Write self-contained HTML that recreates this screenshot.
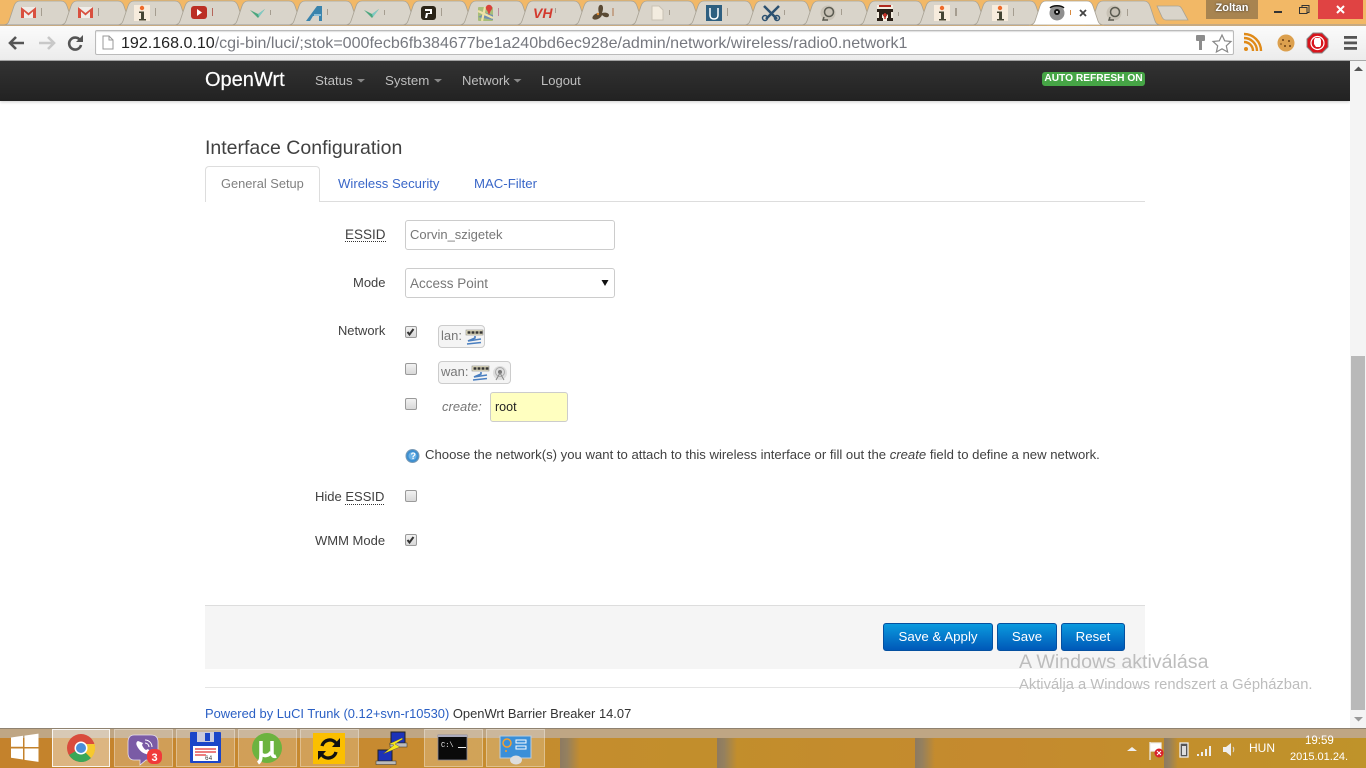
<!DOCTYPE html>
<html><head><meta charset="utf-8"><title>OpenWrt</title>
<style>
html,body{margin:0;padding:0;width:1366px;height:768px;overflow:hidden;background:#fff;font-family:"Liberation Sans",Arial,sans-serif;font-size:14px;color:#404040}
.a{position:absolute;white-space:nowrap}
svg{position:absolute;overflow:visible}
.cb{position:absolute;width:10px;height:10px;border:1px solid #9a9a9a;border-radius:2px;background:linear-gradient(#f2f2f2,#d8d8d8)}
.btn{position:absolute;top:623px;height:26px;border:1px solid #0450a0;border-radius:3px;background:linear-gradient(#0a9ade,#0058b8);color:#fff;text-align:center;line-height:25px;font-size:13.300px}
.inp{position:absolute;box-sizing:border-box;border:1px solid #ccc;border-radius:3px;background:#fff;color:#777}
.bdg{position:absolute;box-sizing:border-box;border:1px solid #ccc;border-radius:4px;background:#f4f4f4;color:#777;height:23px;line-height:20px;padding-left:2px}
.tb{position:absolute;top:729px;height:38px;box-sizing:border-box;border:1px solid rgba(255,255,255,.32);background:rgba(255,255,255,.2)}
.st{position:absolute;top:738px;height:30px;background:linear-gradient(90deg,#8d7a60,#94805f 35%,rgba(141,122,96,0))}
</style></head><body>

<!-- title bar / tabs -->
<div class="a" style="left:0;top:0;width:1366px;height:26px;background:#f2b866"></div>
<svg style="left:0;top:0" width="1366" height="26">
<defs><path id="t" d="M0 25 C3 25 5 24 6 21 L11 6 C12 3 14 1 17 1 L58 1 C61 1 63 3 64 6 L69 21 C70 24 72 25 75 25 Z" fill="#d9d4ca" stroke="#a8a294" stroke-width=".8"/></defs>
<use href="#t" x="3"/><use href="#t" x="60"/><use href="#t" x="117"/><use href="#t" x="174"/><use href="#t" x="231"/><use href="#t" x="288"/><use href="#t" x="345"/><use href="#t" x="402"/><use href="#t" x="459"/><use href="#t" x="516"/><use href="#t" x="573"/><use href="#t" x="630"/><use href="#t" x="687"/><use href="#t" x="744"/><use href="#t" x="801"/><use href="#t" x="858"/><use href="#t" x="915"/><use href="#t" x="972"/><use href="#t" x="1086"/>
<path d="M1029 25 C1032 25 1034 24 1035 21 L1040 6 C1041 3 1043 1 1046 1 L1087 1 C1090 1 1092 3 1093 6 L1098 21 C1099 24 1101 25 1104 25 Z" fill="#fff" stroke="#a8a294" stroke-width=".8"/>
<path d="M1157 6 L1178 6 C1180 6 1181 7 1182 9 L1188 20 L1166 20 C1164 20 1163 19 1162 17 Z" fill="#d9d4ca" stroke="#a8a294" stroke-width=".8"/>
<line x1="0" y1="25" x2="1029" y2="25" stroke="#9c9c9c"/><line x1="1104" y1="25" x2="1366" y2="25" stroke="#9c9c9c"/>
<!-- gmail -->
<g id="m"><rect x="21" y="7" width="15" height="11" fill="#f0ede8"/><path d="M21 18V7l7.500 6L36 7v11h-3V11.500l-4.500 4-4.500-4V18Z" fill="#d9503f"/></g>
<use href="#m" x="57"/>
<rect x="41" y="8" width="1" height="8" fill="#a59d90"/><rect x="98" y="8" width="1" height="8" fill="#a59d90"/>
<!-- i -->
<g id="i"><rect x="134" y="5" width="16" height="16" fill="#f7ecdd"/><circle cx="142" cy="8" r="2.200" fill="#ee6a2b"/><path d="M139 11.500h5V19h2v1.500h-7V19h2v-6h-2Z" fill="#443"/></g>
<rect x="155" y="8" width="1" height="8" fill="#a59d90"/>
<!-- youtube -->
<rect x="191" y="6" width="16" height="13" rx="3" fill="#bb2f24"/><path d="M197 9l5 3.500-5 3.500Z" fill="#fff"/><rect x="212" y="8" width="1" height="8" fill="#b5655a"/>
<!-- V -->
<g id="v"><path d="M250 10l8 4 7-5-7 9Z" fill="#4aa67e"/><path d="M258 14l7-5-6 8Z" fill="#7fc9c4"/></g>
<rect x="270" y="10" width="1" height="5" fill="#a59d90"/>
<use href="#v" x="114"/><rect x="384" y="10" width="1" height="5" fill="#a59d90"/>
<!-- A -->
<path d="M306 21L317 6h5v15h-3v-5h-6l-3 5Z" fill="#3a84ad"/><path d="M314 14h7v2h-7Z" fill="#8fc0d8"/><rect x="327" y="9" width="1" height="6" fill="#a59d90"/>
<!-- P -->
<rect x="421" y="6" width="15" height="14" rx="3" fill="#2a2418"/><path d="M425 9h7v5h-4l-1 4h-2l1-5h4V11h-5Z" fill="#fff"/><rect x="441" y="8" width="1" height="8" fill="#a59d90"/>
<!-- maps -->
<rect x="478" y="7" width="15" height="14" rx="1" fill="#a7bd7a"/><path d="M478 17l15 3V15l-7-2Z" fill="#6f8fb0"/><path d="M478 11l15 7M485 7l-3 14" stroke="#efe2a8" stroke-width="2.200"/><circle cx="489" cy="8" r="3.200" fill="#d9403a"/><path d="M487 10l2 5 2-5Z" fill="#d9403a"/><rect x="498" y="8" width="1" height="8" fill="#c08a9a"/>
<!-- VH -->
<text x="533" y="18" font-family="Liberation Sans" font-size="14" font-weight="bold" font-style="italic" fill="#d33a2e">VH</text><rect x="555" y="8" width="1" height="5" fill="#a59d90"/>
<!-- fan -->
<path d="M599 13c-1-3-1-7 1-8 3-1 4 3 2 8 3-1 7 0 7 2 0 3-4 3-7 0-1 3-6 6-9 4-2-2 2-6 6-6Z" fill="#5a4a34"/><circle cx="598" cy="14" r="1.200" fill="#e08a30"/><rect x="612" y="8" width="2" height="8" fill="#c4a48a"/>
<!-- doc -->
<path d="M652 6h7l4 4v10h-11Z" fill="#f3ecdf" stroke="#c9c2b4"/><rect x="669" y="10" width="1" height="5" fill="#a59d90"/>
<!-- U -->
<rect x="706" y="5" width="16" height="16" fill="#2e5f80"/><path d="M710 8v7c0 3 2 4 4 4s4-1 4-4V8" stroke="#fff" fill="none" stroke-width="1.500"/><rect x="727" y="8" width="1" height="8" fill="#a59d90"/>
<!-- scissors -->
<path d="M764 6l13 13M779 6L766 19" stroke="#2b5070" stroke-width="2.500"/><circle cx="765" cy="18" r="2.500" fill="none" stroke="#2b5070" stroke-width="1.500"/><circle cx="777" cy="18" r="2.500" fill="none" stroke="#2b5070" stroke-width="1.500"/><rect x="784" y="10" width="1" height="5" fill="#a59d90"/>
<!-- Q -->
<g id="q"><circle cx="828" cy="13" r="7.500" fill="#c8c2b6"/><circle cx="829" cy="12" r="4.500" fill="none" stroke="#5a5a50" stroke-width="1.500"/><path d="M824 17l-1 3h5" stroke="#5a5a50" fill="none" stroke-width="1.500"/></g><rect x="841" y="9" width="1" height="6" fill="#a59d90"/>
<!-- M -->
<rect x="877" y="5" width="16" height="16" fill="#f4ede0"/><path d="M877 9h16v3h-2v6h2v3h-6v-3h1v-4l-3 4-3-4v4h1v3h-6v-3h2v-6h-2Z" fill="#2a2018"/><rect x="879" y="5" width="12" height="2" fill="#b02a20"/><path d="M885 13v6M883 15h4" stroke="#d03028" stroke-width="1.500"/><rect x="898" y="12" width="1" height="4" fill="#a59d90"/>
<use href="#i" x="800"/><rect x="955" y="8" width="2" height="8" fill="#a59d90"/>
<use href="#i" x="858"/><rect x="1013" y="8" width="1" height="8" fill="#a59d90"/>
<!-- active -->
<circle cx="1057" cy="13" r="7.500" fill="#8f8f8f"/><circle cx="1057" cy="12" r="3" fill="#111"/><path d="M1050 8c3-3 11-3 14 0" fill="none" stroke="#111" stroke-width="1.500"/><circle cx="1057" cy="12" r="1" fill="#fff"/><rect x="1070" y="10" width="1" height="5" fill="#d88a40"/>
<path d="M1080 10l6 6M1086 10l-6 6" stroke="#444" stroke-width="1.800"/>
<use href="#q" x="286"/><rect x="1127" y="9" width="1" height="7" fill="#a59d90"/>
</svg>
<!-- window controls -->
<div class="a" style="left:1206px;top:0;width:52px;height:19px;background:#a88450;color:#fff;font-size:11px;font-weight:bold;text-align:center;line-height:17px;text-shadow:0 0 2px #333">Zoltan</div>
<svg style="left:0;top:0" width="1366" height="26">
<rect x="1274" y="11" width="8" height="2" fill="#333"/>
<rect x="1302" y="5.500" width="7" height="7" fill="none" stroke="#333"/><rect x="1299.500" y="7.500" width="7.500" height="6" fill="#f2b866" stroke="#333"/>
<rect x="1318" y="0" width="45" height="19" fill="#e04343"/>
<path d="M1337 6l7 7M1344 6l-7 7" stroke="#fff" stroke-width="2"/>
</svg>

<!-- toolbar -->
<div class="a" style="left:0;top:26px;width:1366px;height:34px;background:linear-gradient(#fbfbfb,#ececec)"></div>
<div class="a" style="left:0;top:60px;width:1366px;height:1px;background:#a8a8a8"></div>
<svg style="left:0;top:0" width="1366" height="61">
<path d="M24 43H11M16 37l-6 6 6 6" fill="none" stroke="#555" stroke-width="2.600"/>
<path d="M39 43h13M48 37l6 6-6 6" fill="none" stroke="#c8c8c8" stroke-width="2.600"/>
<path d="M80 40a6 6 0 1 0 1 5" fill="none" stroke="#555" stroke-width="2.600"/><path d="M83 35v7h-7Z" fill="#555"/>
<circle cx="1246" cy="49" r="2" fill="#e08a18"/>
<path d="M1244 42a9 9 0 0 1 9 9M1244 38a13 13 0 0 1 13 13M1244 34a17 17 0 0 1 17 17" fill="none" stroke="#e08a18" stroke-width="2.400"/>
<circle cx="1286" cy="43" r="8.500" fill="#dca04e"/><circle cx="1283" cy="40" r="1" fill="#6a3f14"/><circle cx="1289" cy="41" r="1" fill="#6a3f14"/><circle cx="1285" cy="46" r="1" fill="#6a3f14"/><circle cx="1290" cy="46" r="1" fill="#6a3f14"/><circle cx="1281" cy="44" r=".8" fill="#6a3f14"/>
<path d="M1313 33h9l6 6v8l-6 6h-9l-6-6v-8Z" fill="#d8141c" stroke="#888"/><circle cx="1317.500" cy="43" r="6.500" fill="none" stroke="#fff" stroke-width="1.200"/><path d="M1314 40l1-2h5l1 2v5l-1 2h-4l-2-3Z" fill="#fff"/>
<rect x="1344" y="36" width="13" height="2.800" fill="#555"/><rect x="1344" y="41.500" width="13" height="2.800" fill="#555"/><rect x="1344" y="47" width="13" height="2.800" fill="#555"/>
</svg>
<div class="a" style="left:95px;top:30px;width:1139px;height:25px;box-sizing:border-box;border:1px solid #bbb;border-radius:2px;background:#fff;box-shadow:inset 0 1px 1px #ddd"></div>
<svg style="left:0;top:0" width="120" height="60"><path d="M103 36h6l4 4v9h-10Z" fill="#fff" stroke="#999"/><path d="M109 36v4h4" fill="none" stroke="#999"/></svg>
<div class="a" style="left:121px;top:33px;font-size:16.060px;line-height:20px;color:#76787f"><span style="color:#222">192.168.0.10</span>/cgi-bin/luci/;stok=000fecb6fb384677be1a240bd6ec928e/admin/network/wireless/radio0.network1</div>
<svg style="left:0;top:0" width="1366" height="61">
<rect x="1196" y="35" width="9" height="6" rx="1" fill="#8c8c8c"/><rect x="1199" y="41" width="3" height="9" fill="#8c8c8c"/>
<path d="M1222 35l2.700 5.800 6.300.700-4.700 4.300 1.300 6.200-5.600-3.200-5.600 3.200 1.300-6.200-4.700-4.300 6.300-.700Z" fill="#fff" stroke="#888" stroke-width="1.200"/>
</svg>

<!-- nav -->
<div class="a" style="left:0;top:61px;width:1350px;height:40px;background:linear-gradient(#333,#222);box-shadow:0 1px 3px rgba(0,0,0,.2)"></div>
<div class="a" style="left:205px;top:66px;font-size:20px;line-height:28px;color:#fff;-webkit-text-stroke:.2px #fff">OpenWrt</div>
<div class="a" style="left:315px;top:72px;color:#bfbfbf;line-height:18px;font-size:13.300px">Status</div>
<div class="a" style="left:385px;top:72px;color:#bfbfbf;line-height:18px;font-size:13.300px">System</div>
<div class="a" style="left:462px;top:72px;color:#bfbfbf;line-height:18px;font-size:13px">Network</div>
<div class="a" style="left:541px;top:72px;color:#bfbfbf;line-height:18px;font-size:13px">Logout</div>
<svg style="left:0;top:0" width="600" height="100"><path d="M357 79h8l-4 3.500Z M434 79h8l-4 3.500Z M513.500 79h8l-4 3.500Z" fill="#888"/></svg>
<div class="a" style="left:1042px;top:72px;width:103px;height:14px;background:#46a546;border-radius:3px;color:#fff;font-size:10.200px;font-weight:bold;text-align:center;line-height:14px">AUTO REFRESH ON</div>

<!-- scrollbar -->
<div class="a" style="left:1350px;top:61px;width:16px;height:667px;background:#f4f4f4"></div>
<div class="a" style="left:1351px;top:356px;width:14px;height:354px;background:#b9b9b9"></div>
<svg style="left:0;top:0" width="1366" height="728"><path d="M1354 71h9l-4.500-4.500Z" fill="#555"/><path d="M1354 717h9l-4.500 4.500Z" fill="#999"/></svg>

<!-- content -->
<div class="a" style="left:205px;top:135px;font-size:19.500px;line-height:26px;color:#404040">Interface Configuration</div>
<div class="a" style="left:205px;top:201px;width:940px;height:1px;background:#ddd"></div>
<div class="a" style="left:205px;top:166px;width:115px;height:36px;box-sizing:border-box;border:1px solid #ddd;border-bottom:0;border-radius:4px 4px 0 0;background:#fff"></div>
<div class="a" style="left:221px;top:175px;line-height:17px;font-size:12.850px;color:#808080">General Setup</div>
<div class="a" style="left:338px;top:175px;line-height:17px;font-size:13.150px;color:#3a67c8">Wireless Security</div>
<div class="a" style="left:474px;top:175px;line-height:17px;font-size:13.200px;color:#3a67c8">MAC-Filter</div>

<div class="a" style="left:345px;top:226px;line-height:17px;font-size:13.500px;color:#404040;border-bottom:1px dotted #333;height:15px">ESSID</div>
<div class="inp" style="left:405px;top:220px;width:210px;height:30px;font-size:13px;line-height:27px;padding-left:4px;color:#777">Corvin_szigetek</div>
<div class="a" style="left:353px;top:274px;line-height:17px;font-size:13px">Mode</div>
<div class="inp" style="left:405px;top:268px;width:210px;height:30px;font-size:13.500px;line-height:29px;padding-left:4px">Access Point</div>
<svg style="left:0;top:0" width="700" height="300"><path d="M601.500 280h7l-3.500 6Z" fill="#111"/></svg>

<div class="a" style="left:338px;top:322px;line-height:17px;font-size:12.900px">Network</div>
<div class="cb" style="left:405px;top:326px"></div>
<svg style="left:0;top:0" width="700" height="400"><path d="M407.500 332l2 2.500 4-5.500" fill="none" stroke="#333" stroke-width="2"/></svg>
<div class="bdg" style="left:438px;top:325px;width:47px;font-size:13px">lan:</div>
<div class="cb" style="left:405px;top:363px"></div>
<div class="bdg" style="left:438px;top:361px;width:73px;font-size:13px">wan:</div>
<svg style="left:0;top:0" width="700" height="400">
<g id="nw"><rect x="466" y="330" width="17" height="5" fill="#efe9c8" stroke="#888" stroke-width=".6"/><path d="M467.500 332.500h3M471.500 332.500h3M475.500 332.500h3M479.500 332.500h3" stroke="#333" stroke-width="2.400"/><path d="M475 336v2l-7 3 13-2M467 344l14-1.500" fill="none" stroke="#4a7fc0" stroke-width="1.600"/></g>
<use href="#nw" x="6" y="36"/>
<circle cx="500" cy="373" r="7" fill="#ddd"/><circle cx="500" cy="372" r="4.500" fill="none" stroke="#aaa"/><circle cx="500" cy="372" r="2" fill="#777"/><path d="M496 380l4-7 4 7" fill="none" stroke="#888"/>
</svg>
<div class="cb" style="left:405px;top:398px"></div>
<div class="a" style="left:442px;top:398px;line-height:17px;font-size:13px;font-style:italic;color:#777">create:</div>
<div class="inp" style="left:490px;top:392px;width:78px;height:30px;background:#ffffc0;color:#222;font-size:12.500px;line-height:28px;padding-left:4px">root</div>

<svg style="left:0;top:0" width="500" height="470"><circle cx="412.500" cy="456" r="6.500" fill="#3d8fd0" stroke="#7a9ab5"/><circle cx="412.500" cy="456" r="4" fill="#6cb2e6"/></svg>
<div class="a" style="left:410.500px;top:450px;font-size:9px;line-height:12px;font-weight:bold;color:#fff">?</div>
<div class="a" style="left:425px;top:446px;line-height:17px;font-size:13.130px;color:#404040">Choose the network(s) you want to attach to this wireless interface or fill out the <i>create</i> field to define a new network.</div>

<div class="a" style="left:315px;top:488px;line-height:17px;font-size:13px">Hide <span style="border-bottom:1px dotted #333">ESSID</span></div>
<div class="cb" style="left:405px;top:490px"></div>
<div class="a" style="left:315px;top:532px;line-height:17px;font-size:13px">WMM Mode</div>
<div class="cb" style="left:405px;top:534px"></div>
<svg style="left:0;top:0" width="500" height="560"><path d="M407.500 540l2 2.500 4-5.500" fill="none" stroke="#333" stroke-width="2"/></svg>

<div class="a" style="left:205px;top:605px;width:940px;height:64px;box-sizing:border-box;border-top:1px solid #ddd;background:#f5f5f5"></div>
<div class="btn" style="left:883px;width:108px">Save &amp; Apply</div>
<div class="btn" style="left:997px;width:58px">Save</div>
<div class="btn" style="left:1061px;width:62px">Reset</div>
<div class="a" style="left:205px;top:687px;width:940px;height:1px;background:#e5e5e5"></div>
<div class="a" style="left:205px;top:705px;line-height:17px;font-size:12.920px;color:#333"><span style="color:#2a5fc4">Powered by LuCI Trunk (0.12+svn-r10530)</span> OpenWrt Barrier Breaker 14.07</div>

<div class="a" style="left:1019px;top:650px;font-size:19.600px;line-height:24px;color:#bdbdbd">A Windows aktiválása</div>
<div class="a" style="left:1019px;top:676px;font-size:14.750px;line-height:18px;color:#bdbdbd">Aktiválja a Windows rendszert a Gépházban.</div>

<!-- taskbar -->
<div class="a" style="left:0;top:728px;width:1366px;height:40px;background:linear-gradient(90deg,#c4822c 0,#c78b30 400px,#c28e2c 700px,#c58a2e 1000px,#bf932a 1366px)"></div>
<div class="a" style="left:0;top:728px;width:1366px;height:10px;background:#bfa684;border-top:1px solid #8f8270;box-sizing:border-box"></div>
<div class="st" style="left:560px;width:20px"></div>
<div class="st" style="left:717px;width:20px"></div>
<div class="st" style="left:915px;width:20px"></div>
<div class="st" style="left:1164px;width:14px"></div>
<svg style="left:0;top:0" width="40" height="768"><path d="M11 737.500l12-1.700v11H11Z M24.500 735.600l14-2v13.400h-14Z M11 748.500h12v11l-12-1.700Z M24.500 748.500h14v13.400l-14-2Z" fill="#fff"/></svg>
<div class="tb" style="left:52px;width:58px;background:rgba(255,255,255,.4);border-color:rgba(255,255,255,.85)"></div>
<div class="tb" style="left:114px;width:59px"></div>
<div class="tb" style="left:176px;width:59px"></div>
<div class="tb" style="left:238px;width:59px"></div>
<div class="tb" style="left:300px;width:59px"></div>
<div class="tb" style="left:424px;width:59px"></div>
<div class="tb" style="left:486px;width:59px"></div>
<svg style="left:0;top:0" width="600" height="768">
<!-- Chrome -->
<g transform="translate(8,0)"><circle cx="73" cy="748" r="14" fill="#d94c3d"/><path d="M73 748L61 755A14 14 0 0 0 83 758Z" fill="#3aa757"/><path d="M73 748L83 758A14 14 0 0 0 86.500 744H73Z" fill="#f6c92e"/><circle cx="73" cy="748" r="6.500" fill="#fff"/><circle cx="73" cy="748" r="5" fill="#4a8fd8"/></g>
<!-- Viber -->
<g transform="translate(4,0)"><path d="M130 735h17c5 0 7 3 7 7v11c0 4-2 7-7 7h-5l-6 5v-5h-6c-4 0-6-3-6-7v-11c0-4 2-7 6-7Z" fill="#7a5ba5" stroke="#e8e0ee" stroke-width=".8"/>
<path d="M134 741c-2 1-2 3-1 5 2 4 5 7 9 8 2 1 4 0 5-2l-3-3-2 1c-2-1-3-3-4-5l1-2Z" fill="#fff"/>
<path d="M141 740a7 7 0 0 1 7 7M141 743a4 4 0 0 1 4 4" stroke="#fff" fill="none"/>
<rect x="143" y="749" width="15" height="15" rx="6" fill="#f03a3a"/>
<text x="147.500" y="761" font-family="Liberation Sans" font-size="11" font-weight="bold" fill="#fff">3</text></g>
<!-- floppy -->
<rect x="190" y="732" width="31" height="31" rx="1" fill="#1c46c8"/><rect x="197" y="732" width="17" height="10" fill="#ccd"/><rect x="205" y="733" width="5" height="8" fill="#1c46c8"/><rect x="193" y="746" width="25" height="15" fill="#fff"/><path d="M195 749h21M195 752h21M195 755h11" stroke="#e03030" stroke-width="1.200"/>
<text x="205" y="760" font-family="Liberation Mono" font-size="6" fill="#333">64</text>
<!-- uTorrent -->
<g transform="translate(26,0)"><circle cx="241" cy="748" r="15" fill="#6cb33f"/><path d="M235 741v11c0 6 0 9-3 11M235 753c2 4 8 3 10-1M246 741v12c0 3 2 4 4 3" fill="none" stroke="#fff" stroke-width="3.500"/></g>
<!-- yellow sync -->
<rect x="313" y="733" width="32" height="31" fill="#fbbf00"/>
<path d="M322 746a8 8 0 0 1 14-3M336 752a8 8 0 0 1-14 3" fill="none" stroke="#111" stroke-width="3.400"/><path d="M340 738v9h-8Z M318 760v-9h8Z" fill="#111"/>
<!-- network -->
<rect x="391" y="732" width="14" height="11" fill="#1c32b8" stroke="#222"/><rect x="390" y="743" width="17" height="4" fill="#bbb" stroke="#333" stroke-width=".5"/>
<rect x="378" y="750" width="14" height="11" fill="#1c32b8" stroke="#222"/><rect x="376" y="761" width="20" height="3.500" fill="#bbb" stroke="#333" stroke-width=".5"/>
<path d="M402 738l-13 6 5 1-11 9 17-7-5-3 8-5Z" fill="#f7e81c" stroke="#444" stroke-width=".4"/>
<!-- cmd -->
<rect x="438" y="735" width="29" height="25" fill="#0a0a0a" stroke="#889" stroke-width=".8"/><rect x="438" y="735" width="29" height="2" fill="#aab"/>
<text x="441" y="747" font-family="Liberation Mono" font-size="7" fill="#eee">C:\</text><rect x="458" y="747" width="8" height="1" fill="#eee"/>
<!-- control panel -->
<rect x="500" y="736" width="31" height="22" fill="#3a8fd8" stroke="#bcd"/><rect x="516" y="740" width="10" height="3" fill="none" stroke="#fff"/><rect x="516" y="746" width="10" height="3" fill="none" stroke="#fff"/><circle cx="507" cy="743" r="4" fill="none" stroke="#f5a030" stroke-width="1.500"/><circle cx="506" cy="751" r="1" fill="#f5a030"/>
<ellipse cx="516" cy="760" rx="6" ry="4.500" fill="#ddd"/>
</svg>
<svg style="left:0;top:0" width="1366" height="768">
<path d="M1127 751h10l-5-4Z" fill="#eee"/>
<path d="M1150 742v18M1150 743h11v8h-11" fill="#fff" stroke="#eee" stroke-width="1.200"/><circle cx="1159" cy="753" r="4.500" fill="#d8202c"/><path d="M1157 751l4 4M1161 751l-4 4" stroke="#fff"/>
<rect x="1180" y="743" width="8" height="14" fill="#555" stroke="#eee" stroke-width="1.300"/>
<rect x="1182" y="746" width="4" height="9" fill="#ddd"/>
<path d="M1197 754h2v2h-2Z M1201 752h2v4h-2Z M1205 749h2v7h-2Z M1209 746h2v10h-2Z" fill="#eee"/>
<path d="M1223 747h3l5-4v13l-5-4h-3Z" fill="#eee"/><path d="M1233 747c1 1 1 4 0 5" stroke="#ddd" fill="none"/>
</svg>
<div class="a" style="left:1249px;top:741px;font-size:12px;line-height:15px;color:#fff">HUN</div>
<div class="a" style="left:1305px;top:734px;font-size:11.500px;line-height:15px;color:#fff">19:59</div>
<div class="a" style="left:1290px;top:750px;font-size:11px;line-height:15px;color:#fff">2015.01.24.</div>
</body></html>
